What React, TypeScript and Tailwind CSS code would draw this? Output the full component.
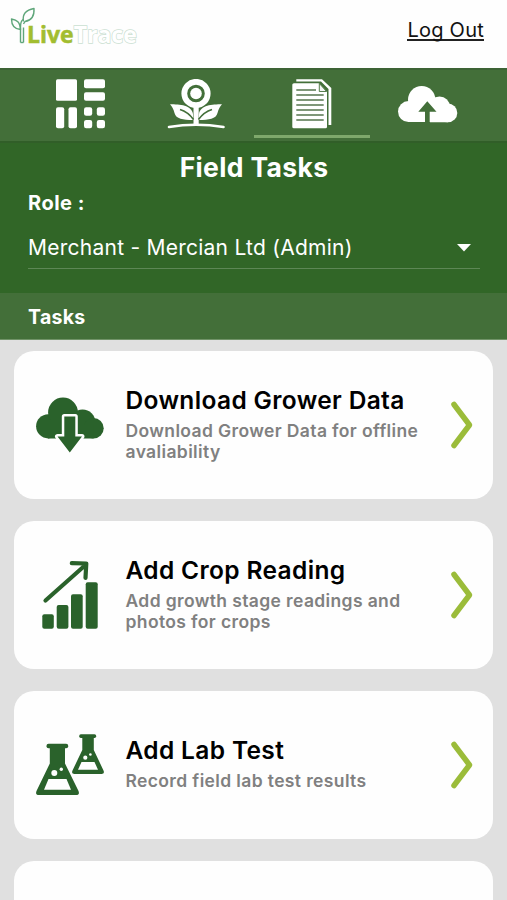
import { useState } from "react";

const tasks = [
   {
      title: "Download Grower Data",
      description: "Download Grower Data for offline avaliability",
      icon: <DownloadIcon />,
   },
   {
      title: "Add Crop Reading",
      description: "Add growth stage readings and photos for crops",
      icon: <ReadingIcon />,
   },
   {
      title: "Add Lab Test",
      description: "Record field lab test results",
      icon: <LabIcon />,
   },
];

const tabs = [
   { id: "dashboard", icon: <DashboardIcon /> },
   { id: "crops", icon: <CropIcon /> },
   { id: "tasks", icon: <DocumentIcon /> },
   { id: "upload", icon: <UploadIcon /> },
];

export default function App() {
   const [active, setActive] = useState("tasks");

   return (
      <div className="flex h-[900px] w-[507px] flex-col overflow-hidden bg-[#e0e0e0] font-['Inter',sans-serif]">
         <header className="flex h-[68px] shrink-0 items-start justify-between bg-[#fefefe] pl-[10px] pr-[23px]">
            <Logo />
            <a className="mt-[18px] h-[23px] cursor-pointer border-b-2 border-[#222] text-[20px] leading-[25px] tracking-[0.25px] text-[#111]">
               Log Out
            </a>
         </header>

         <nav className="flex h-[75px] shrink-0 border-b-2 border-t-2 border-b-[#315e28] border-t-[#3d6335] bg-[#436f39] pl-[22px] pr-[21px]">
            {tabs.map((tab) => (
               <button
                  key={tab.id}
                  onClick={() => setActive(tab.id)}
                  className="flex w-[116px] cursor-pointer flex-col items-center justify-between pb-[3px] pt-[9px]"
               >
                  {tab.icon}
                  <span className={tab.id === active ? "h-[3px] w-full bg-[#7fa86c]" : "h-[3px] w-full"} />
               </button>
            ))}
         </nav>

         <section className="flex h-[150px] shrink-0 flex-col bg-[#316627] pl-[28px] pr-[27px] text-white">
            <h1 className="mt-[8px] text-center text-[26.5px] font-bold leading-[32px] tracking-[0.35px]">Field Tasks</h1>
            <label className="mt-[8px] text-[20px] font-bold leading-[24px] tracking-[0.5px]">Role :</label>
            <div className="mt-[14px] flex h-[40px] items-center justify-between border-b border-[#5d8755] pb-[2px] pr-[9px]">
               <span className="text-[21px] tracking-[0.25px]">Merchant - Mercian Ltd (Admin)</span>
               <svg width="14" height="8" viewBox="0 0 14 8" fill="white">
                  <path d="M0 0h14L7 7.5z" />
               </svg>
            </div>
         </section>

         <div className="flex h-[47px] shrink-0 items-center border-b border-[#719368] bg-[#436f39] pl-[28px] pt-[3px] text-[19.5px] font-bold tracking-[0.3px] text-white">
            Tasks
         </div>

         <main className="flex flex-col gap-[22px] px-[14px] pt-[11px]">
            {tasks.map((task) => (
               <TaskCard key={task.title} {...task} />
            ))}
            <div className="h-[148px] shrink-0 rounded-[20px] bg-[#fefefe]" />
         </main>
      </div>
   );
}

type TaskCardProps = {
   title: string;
   description: string;
   icon: React.ReactNode;
};

function TaskCard({ title, description, icon }: TaskCardProps) {
   return (
      <div className="flex h-[148px] w-[479px] shrink-0 items-center rounded-[20px] bg-[#fefefe] pl-[20px] pr-[20px]">
         {icon}
         <div className="ml-[19.5px] w-[310px] pb-[2px]">
            <h2 className="mb-[5px] whitespace-nowrap text-[24.5px] font-semibold leading-[29px] tracking-[0.35px] text-black">{title}</h2>
            <p className="w-[305px] text-[17.5px] font-semibold leading-[21.5px] tracking-[0.37px] text-[#808080]">{description}</p>
         </div>
         <svg className="ml-auto" width="24" height="50" viewBox="0 0 24 50" fill="none" stroke="#9bbc3a" strokeWidth="5.5" strokeLinecap="round" strokeLinejoin="round">
            <path d="M5 4.500L20.500 25L5 45.500" />
         </svg>
      </div>
   );
}

function Logo() {
   return (
      <div className="flex pt-[7px]">
         <svg width="26" height="38" viewBox="0 0 26 38" fill="none" stroke="#5fa67a" strokeWidth="1.400" strokeLinejoin="round">
            <path d="M10.500 35.500V20C10.500 17 11 14 13 12.500" />
            <path d="M13.500 35.500V20.500" />
            <path d="M10.500 35.500h3" />
            <path d="M13.500 14.500C12 7 16 3 24 1.500C24.500 9 21 13.500 15 14.500L13.500 17" />
            <path d="M10.500 22.500C4.500 22 1.500 18 1.500 12C7 13 10 15 10.500 22.500z" />
         </svg>
         <div className="-ml-[9px] mt-[11px] font-['Open_Sans',sans-serif] text-[23px] font-bold leading-[32px]">
            <span className="text-[#a2bd30] [-webkit-text-stroke:0.5px_#a2bd30]">Live</span>
            <span className="text-white [-webkit-text-stroke:1.4px_#cbe0d2] [paint-order:stroke]">Trace</span>
         </div>
      </div>
   );
}

function DashboardIcon() {
   return (
      <svg width="50" height="50" viewBox="55 79 50 50" fill="white">
         <rect x="56" y="79.300" width="21" height="21.400" rx="1.500" />
         <rect x="84" y="79.300" width="21" height="9" rx="2" />
         <rect x="84" y="92.300" width="21" height="8.400" rx="2" />
         <rect x="56" y="107.300" width="8.200" height="20.900" rx="2" />
         <rect x="68.500" y="107.300" width="8.500" height="20.900" rx="2" />
         <rect x="84" y="107.300" width="8.200" height="8.400" rx="2.200" />
         <rect x="96.800" y="107.300" width="8.200" height="8.400" rx="2.200" />
         <rect x="84" y="119.900" width="8.200" height="8.300" rx="2.200" />
         <rect x="96.800" y="119.900" width="8.200" height="8.300" rx="2.200" />
      </svg>
   );
}

function CropIcon() {
   return (
      <svg width="60" height="50" viewBox="166 79 60 50" fill="white">
         <circle cx="196" cy="93.500" r="11.700" fill="none" stroke="white" strokeWidth="5.800" />
         <circle cx="196" cy="93.500" r="5.800" />
         <path d="M193.500 106h5.200v18.500h-5.200z" />
         <path d="M170 104.300C180 104.500 191.500 105 193 114L193 120C183 120 176 119 174.500 113C173.500 109 172 106.500 170 104.300z" />
         <path d="M222 104.300C212 104.500 200.500 105 199 114L199 120C209 120 216 119 217.500 113C218.500 109 220 106.500 222 104.300z" />
         <path d="M180 109.500C185 111 189.500 114 193.500 119.500M212 109.500C207 111 202.500 114 198.500 119.500" fill="none" stroke="#436f39" strokeWidth="1.700" />
         <path d="M169 127Q196 122.500 223.500 127" fill="none" stroke="white" strokeWidth="2.600" strokeLinecap="round" />
      </svg>
   );
}

function DocumentIcon() {
   return (
      <svg width="42" height="50" viewBox="291 79 42 50">
         <path d="M296.300 81.500V79.300H322L331.300 88V125H328.500V89L321 81.500z" fill="white" />
         <path d="M294 83.300H319L327 91.800V126.800Q327 128.300 325.500 128.300H293.800Q292.300 128.300 292.300 126.800V84.800Q292.300 83.300 294 83.300z" fill="white" />
         <path d="M319.300 83.500V91.500H326.500z" fill="#f4f4f4" stroke="#436f39" strokeWidth="0.900" />
         <path d="M296.300 90H316M296.300 95H323.700M296.300 100H323.700M296.300 105H323.700M296.300 110H323.700M296.300 115H323.700M296.300 120H323.700" stroke="#55764e" strokeWidth="1.500" />
      </svg>
   );
}

function UploadIcon() {
   return (
      <svg width="60" height="50" viewBox="398 79 60 50" fill="white">
         <circle cx="408.500" cy="111.600" r="10.500" />
         <circle cx="421.700" cy="99.700" r="13.700" />
         <circle cx="439.500" cy="107" r="10.500" />
         <circle cx="447.900" cy="112.900" r="9.400" />
         <path d="M408 104h32v18.100h-32zM430 110h18v12.300h-18z" />
         <path d="M427.300 101.300L436.500 111.700H429.700V122.500H425V111.700H418.300z" fill="#436f39" />
      </svg>
   );
}

function DownloadIcon() {
   return (
      <svg width="72" height="64" viewBox="34 393 72 64" fill="#2a622b">
         <circle cx="48.200" cy="426.300" r="12.100" />
         <circle cx="63" cy="412.500" r="14.900" />
         <circle cx="82.500" cy="422.300" r="12.900" />
         <circle cx="93.500" cy="428.200" r="10.200" />
         <path d="M48 420h35v18.400h-35zM80 425h13.500v13.400h-13.500z" />
         <path d="M64.300 416.500H75.300V436.500H82L69.800 452.500L57.500 436.500H64.300z" stroke="#fefefe" strokeWidth="5" paintOrder="stroke" strokeLinejoin="round" />
      </svg>
   );
}

function ReadingIcon() {
   return (
      <svg width="72" height="74" viewBox="34 558 72 74" fill="#2a622b">
         <rect x="42.300" y="614.200" width="11.500" height="14.500" rx="2" />
         <rect x="56.700" y="605" width="11.700" height="23.700" rx="2" />
         <rect x="71" y="594.200" width="11.700" height="34.500" rx="2" />
         <rect x="85.700" y="582.300" width="12" height="46.400" rx="2" />
         <path d="M45.500 600.500L86 564.500M71.800 563.200L86.300 563.500L85.500 577.800" fill="none" stroke="#2a622b" strokeWidth="4.200" strokeLinecap="round" strokeLinejoin="round" />
      </svg>
   );
}

function LabIcon() {
   return (
      <svg width="72" height="70" viewBox="34 730 72 70">
         <g fill="#2a622b">
            <rect x="46.500" y="743.700" width="21.700" height="4.500" rx="2" />
            <path d="M49.800 746H65V763.500L78.500 791Q80 795 76 795H39Q35 795 36.500 791L49.800 763.500z" />
            <rect x="79.200" y="734.200" width="17" height="3.800" rx="1.700" />
            <path d="M82.300 736H93.800V750L103.500 770.500Q105 773.900 101.500 773.900H74.500Q71 773.900 72.500 770.500L82.300 750z" />
         </g>
         <g fill="#fefefe">
            <path d="M48.500 779H66.500L71 789.700H44z" />
            <circle cx="54.300" cy="773" r="3" />
            <circle cx="61.300" cy="769.300" r="1.700" />
            <path d="M81.500 762H94.500L98 769.700H78z" />
            <circle cx="85.300" cy="757.700" r="2.100" />
            <circle cx="90.400" cy="754.500" r="1.300" />
         </g>
      </svg>
   );
}
